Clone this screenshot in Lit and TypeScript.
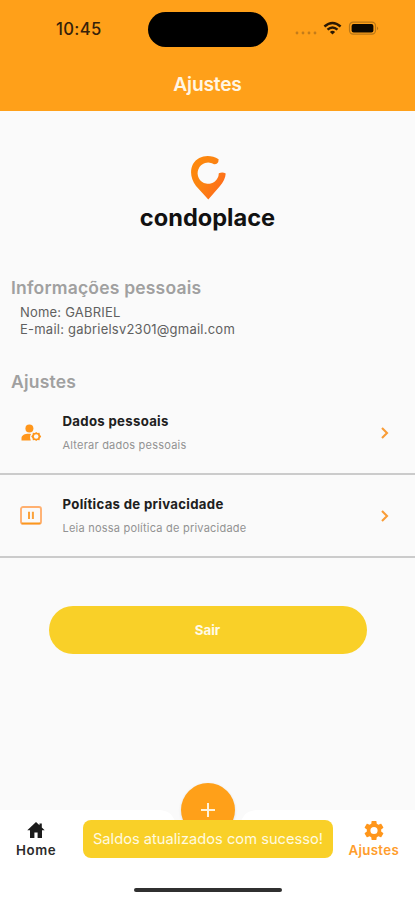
import { LitElement, html, css, svg } from "lit";
import { customElement, property } from "lit/decorators.js";

const userGear = svg`
  <svg width="22" height="18" viewBox="0 0 22 18">
    <circle cx="9.4" cy="4.600" r="4" fill="#ff961b"/>
    <path d="M1.500 16.400V14C1.500 11.200 5 9.700 8.600 9.700C9.600 9.700 10.300 9.800 11 10.100C9.800 12.200 9.800 14.400 10.800 16.400Z" fill="#ff961b"/>
    <path d="M16.200 7.900L17.500 9L19.500 8.800L19.900 10.800L21.200 12.500L19.900 14.200L19.500 16.200L17.500 16L16.200 17.100L14.900 16L12.900 16.200L12.500 14.200L11.200 12.500L12.500 10.800L12.900 8.800L14.900 9Z" fill="#ff961b"/>
    <circle cx="16.200" cy="12.500" r="2.300" fill="#fafafa"/>
  </svg>`;

const privacy = svg`
  <svg width="22" height="19" viewBox="0 0 22 19">
    <rect x="1" y="1" width="20" height="16.800" rx="2" fill="none" stroke="#ffb070" stroke-width="1.900"/>
    <path d="M1.600 17.400H20.400" stroke="#fa981c" stroke-width="1.600"/>
    <path d="M9 5.700V13M12.900 5.700V13" stroke="#fba23b" stroke-width="2"/>
  </svg>`;

@customElement("setting-row")
export class SettingRow extends LitElement {
  @property() heading = "";
  @property() detail = "";
  @property() icon = "";

  static styles = css`
    :host {
      display: flex;
      align-items: center;
      box-sizing: border-box;
      height: 83px;
      padding: 0 25px 0 20px;
      border-bottom: 2px solid #cbcbcb;
    }
    .icon { width: 42.5px; display: flex; }
    .copy { flex: 1; display: flex; flex-direction: column; gap: 7px; white-space: nowrap; }
    .heading { font-size: 13.2px; line-height: 18px; font-weight: 650; color: #202020; letter-spacing: 0.31px; }
    .detail { font-size: 11px; line-height: 17px; color: #929292; letter-spacing: 0.22px; }
    svg { display: block; }
  `;

  render() {
    return html`
      <div class="icon">${this.icon === "user" ? userGear : privacy}</div>
      <div class="copy">
        <span class="heading">${this.heading}</span>
        <span class="detail">${this.detail}</span>
      </div>
      <svg width="10" height="14" viewBox="0 0 10 14">
        <path d="M2 2L7 7L2 12" fill="none" stroke="#f99c36" stroke-width="2.100"/>
      </svg>
    `;
  }
}

@customElement("app-root")
export class AppRoot extends LitElement {
  static styles = css`
    :host {
      display: flex;
      flex-direction: column;
      position: relative;
      width: 415px;
      height: 900px;
      overflow: hidden;
      background: #fafafa;
      font-family: Inter, "Liberation Sans", sans-serif;
    }
    svg { display: block; }
    .top { height: 111px; background: #ffa019; display: flex; flex-direction: column; }
    .status {
      display: grid;
      grid-template-columns: 148px 120px 1fr;
      align-items: center;
      height: 58px;
    }
    .time { padding-left: 56px; font-size: 16.6px; font-weight: 500; color: #35210a; letter-spacing: 0.35px; }
    .island { height: 35px; margin-top: 1px; border-radius: 18px; background: #000; }
    .signals { display: flex; align-items: center; padding-left: 27px; }
    .title {
      text-align: center;
      font-size: 19.2px;
      letter-spacing: -0.2px;
      font-weight: 600;
      line-height: 54px;
      color: #fff6e4;
    }
    .brand { display: flex; flex-direction: column; align-items: center; padding-top: 44px; height: 80px; }
    .brand-name { margin-top: 2px; font-size: 23.6px; line-height: 30px; font-weight: 700; color: #111; }
    .section { padding-left: 11px; font-size: 17.5px; line-height: 24px; font-weight: 600; color: #a0a0a0; letter-spacing: 0.2px; }
    .personal { margin-top: 41px; }
    .settings { margin-top: 33px; }
    .info { margin-top: 4px; padding-left: 20px; font-size: 13px; line-height: 16.5px; color: #606060; }
    .name { letter-spacing: 0.2px; }
    .mail { letter-spacing: 0.23px; }
    .rows { margin-top: -2px; }
    .logout {
      align-self: center;
      margin-top: 48px;
      width: 318px;
      height: 48px;
      border: 0;
      border-radius: 24px;
      background: #f9d028;
      color: #fffbe8;
      font: 700 13.3px/48px Inter, sans-serif;
      padding: 0;
    }
    .nav { margin-top: auto; position: relative; height: 90px; }
    .bar { position: absolute; inset: 0; }
    .fab {
      position: absolute;
      left: 181px;
      top: -27px;
      width: 54px;
      height: 54px;
      border-radius: 50%;
      background: #ffa019;
      box-shadow: 0 1px 3px rgba(0, 0, 0, 0.12);
      display: grid;
      place-items: center;
    }
    .tabs { position: relative; display: flex; justify-content: space-between; padding: 10px 16px 0 16px; }
    .tab { display: flex; flex-direction: column; align-items: center; font-size: 13.3px; letter-spacing: 0.6px; line-height: 18px; font-weight: 600; color: #2b2b2b; }
    .tab svg { margin-bottom: 1px; }
    .tab.active { color: #ff9d2c; letter-spacing: 0.3px; }
    .toast {
      position: absolute;
      left: 83px;
      top: 10px;
      width: 250px;
      height: 38px;
      border-radius: 8px;
      background: #f9d028;
      color: #fffae0;
      font-size: 14.7px;
      line-height: 38px;
      text-align: center;
      white-space: nowrap;
    }
    .handle {
      position: absolute;
      left: 134px;
      top: 78px;
      width: 148px;
      height: 4px;
      border-radius: 2px;
      background: #303030;
    }
  `;

  render() {
    return html`
      <header class="top">
        <div class="status">
          <span class="time">10:45</span>
          <span class="island"></span>
          <div class="signals">
            <svg width="88" height="20" viewBox="0 0 88 20">
              <g fill="#c47c1a">
                <circle cx="2" cy="14" r="1.4"/><circle cx="8" cy="14" r="1.4"/>
                <circle cx="14" cy="14" r="1.4"/><circle cx="20" cy="14" r="1.4"/>
              </g>
              <g fill="none" stroke="#2b1904" stroke-width="2.400">
                <path d="M29.400 7.500Q37.500 0.300 45.600 7.500"/>
                <path d="M32.500 10.600Q37.500 6.200 42.500 10.600"/>
              </g>
              <path d="M37.500 15.600L34.900 12.900Q37.500 10.800 40.100 12.900Z" fill="#2b1904"/>
              <rect x="54.500" y="3.200" width="26" height="12" rx="3.600" fill="none" stroke="#b97616" stroke-width="1.200"/>
              <rect x="56.600" y="5.100" width="21.800" height="8.400" rx="2" fill="#0c0700"/>
              <path d="M82 7.400Q84.400 9.300 82 11.200Z" fill="#b97616"/>
            </svg>
          </div>
        </div>
        <div class="title">Ajustes</div>
      </header>

      <div class="brand">
        <svg width="36" height="46" viewBox="0 0 36 46">
          <defs>
            <linearGradient id="pin" x1="0" y1="0" x2="1" y2="0.7">
              <stop offset="0" stop-color="#ff8a0a"/>
              <stop offset=".5" stop-color="#fb8411"/>
              <stop offset="1" stop-color="#ff6a1c"/>
            </linearGradient>
          </defs>
          <path d="M28.600 4.200C20 -1.500 8 0.200 3 9C-.6 16.200 1 24 6 31L18.300 44.600L29.600 31.500C33.400 27 35.500 23 35.700 18.500Q32.500 16.400 28.800 18.300A10.600 10.600 0 1 1 24 9.300Q28.800 9.500 28.600 4.200Z" fill="url(#pin)"/>
        </svg>
        <div class="brand-name">condoplace</div>
      </div>

      <div class="section personal">Informações pessoais</div>
      <div class="info">
        <div class="name">Nome: GABRIEL</div>
        <div class="mail">E-mail: gabrielsv2301@gmail.com</div>
      </div>

      <div class="section settings">Ajustes</div>
      <div class="rows">
        <setting-row icon="user" heading="Dados pessoais" detail="Alterar dados pessoais"></setting-row>
        <setting-row icon="privacy" heading="Políticas de privacidade" detail="Leia nossa política de privacidade"></setting-row>
      </div>

      <button class="logout">Sair</button>

      <nav class="nav">
        <svg class="bar" width="415" height="90" viewBox="0 0 415 90">
          <path d="M0 0H160Q171 1 174 9Q182 36 208 36Q234 36 242 9Q245 1 256 0H415V90H0Z" fill="#fff"/>
        </svg>
        <div class="fab">
          <svg width="16" height="16" viewBox="0 0 16 16"><path d="M8 1V15M1 8H15" stroke="#fff3dc" stroke-width="2"/></svg>
        </div>
        <div class="tabs">
          <div class="tab">
            <svg width="20" height="20" viewBox="0 0 20 20">
              <path d="M10 2L1.300 10.300H4V18H8.400V12.500H11.600V18H16V10.300H18.700L15.800 7.500V3.500H13.500V5.300Z" fill="#1b1b1b"/>
            </svg>
            <span>Home</span>
          </div>
          <div class="tab active">
            <svg width="22" height="20" viewBox="1 1.500 22 20">
              <path fill="#ff961b" fill-rule="evenodd" d="M19.140 12.940c.04-.3.060-.610.060-.940 0-.320-.020-.640-.070-.940l2.030-1.580c.18-.14.230-.410.120-.610l-1.920-3.320c-.12-.22-.37-.29-.59-.22l-2.390.960c-.5-.38-1.030-.7-1.620-.940l-.36-2.540c-.04-.24-.24-.41-.48-.41h-3.840c-.24 0-.43.170-.47.410l-.36 2.540c-.59.240-1.130.570-1.620.940l-2.390-.960c-.22-.08-.47 0-.59.220L2.740 8.870c-.12.210-.08.470.12.610l2.030 1.580c-.05.3-.09.630-.09.940s.02.640.070.940l-2.030 1.580c-.18.140-.23.410-.12.610l1.920 3.320c.12.220.37.290.59.220l2.390-.960c.5.380 1.030.7 1.620.940l.36 2.540c.05.240.24.410.48.410h3.840c.24 0 .44-.17.470-.41l.36-2.540c.59-.24 1.130-.56 1.620-.94l2.390.960c.22.080.47 0 .59-.22l1.920-3.320c.12-.22.070-.47-.12-.61zM12 15.600A3.600 3.600 0 1 1 12 8.400A3.600 3.600 0 0 1 12 15.600z"/>
            </svg>
            <span>Ajustes</span>
          </div>
        </div>
        <div class="toast">Saldos atualizados com sucesso!</div>
        <div class="handle"></div>
      </nav>
    `;
  }
}
